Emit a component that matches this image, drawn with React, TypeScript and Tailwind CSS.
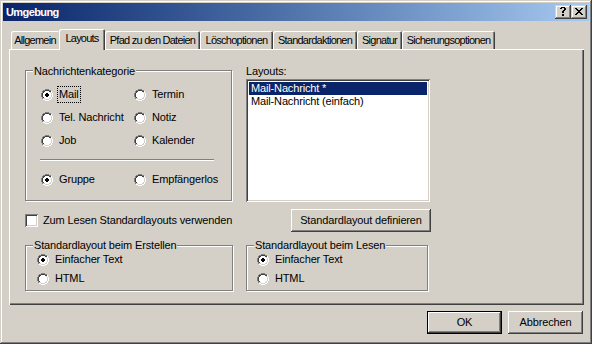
import React from "react";

const RING = [
  "....GGGG....",
  "..GGDDDDGG..",
  ".GDDWWWWDDH.",
  ".GDWWWWWWLH.",
  "GDWWWWWWWWLH",
  "GDWWWWWWWWLH",
  "GDWWWWWWWWLH",
  "GDWWWWWWWWLH",
  ".GDWWWWWWLH.",
  ".GLLWWWWLLH.",
  "..HHLLLLHH..",
  "....HHHH....",
];
const DOT = [".XX.", "XXXX", "XXXX", ".XX."];
const COLORS: Record<string, string> = {
  G: "#808080",
  D: "#404040",
  W: "#ffffff",
  L: "#d4d0c8",
  H: "#ffffff",
  X: "#000000",
};

function PixelMap({ map, ox = 0, oy = 0, prefix }: { map: string[]; ox?: number; oy?: number; prefix: string }) {
  const out: React.ReactNode[] = [];
  map.forEach((row, y) =>
    row.split("").forEach((c, x) => {
      if (c !== ".")
        out.push(<rect key={`${prefix}-${x}-${y}`} x={x + ox} y={y + oy} width={1} height={1} fill={COLORS[c]} />);
    })
  );
  return <>{out}</>;
}

function Radio({ checked }: { checked?: boolean }) {
  return (
    <svg width={12} height={12} viewBox="0 0 12 12" shapeRendering="crispEdges" className="shrink-0">
      <PixelMap map={RING} prefix="r" />
      {checked && <PixelMap map={DOT} ox={4} oy={4} prefix="d" />}
    </svg>
  );
}

function RadioItem({ label, checked, focus }: { label: string; checked?: boolean; focus?: boolean }) {
  return (
    <div className="flex items-center gap-[6px] h-[13px]">
      <Radio checked={checked} />
      {focus ? (
        <span className="-ml-[2px] -my-[2px] px-[1px] py-[1px] border border-dotted border-black whitespace-nowrap leading-[13px]">
          {label}
        </span>
      ) : (
        <span className="whitespace-nowrap leading-[13px]">{label}</span>
      )}
    </div>
  );
}

function GroupBox({
  label,
  className,
  labelTop,
  children,
}: {
  label: string;
  className: string;
  labelTop: string;
  children: React.ReactNode;
}) {
  return (
    <div className={`relative shrink-0 border border-[#808080] shadow-[1px_1px_0_#fff,inset_1px_1px_0_#fff] ${className}`}>
      <span className={`absolute left-[7px] ${labelTop} px-[1px] bg-[#d4d0c8] whitespace-nowrap leading-[13px]`}>{label}</span>
      {children}
    </div>
  );
}

function PushButton({ children, className, def }: { children: React.ReactNode; className: string; def?: boolean }) {
  if (def) {
    return (
      <div className={`border border-black ${className}`}>
        <div className="w-full h-full flex items-center justify-center shadow-[inset_-1px_-1px_#404040,inset_1px_1px_#fff,inset_-2px_-2px_#808080]">
          {children}
        </div>
      </div>
    );
  }
  return (
    <div
      className={`flex items-center justify-center shadow-[inset_-1px_-1px_#404040,inset_1px_1px_#fff,inset_-2px_-2px_#808080] ${className}`}
    >
      {children}
    </div>
  );
}

function Tab({ label, w, selected, noRight }: { label: string; w: string; selected?: boolean; noRight?: boolean }) {
  if (selected) {
    return (
      <div
        className={`relative z-10 -mb-[1px] h-[21px] ${w} shrink-0 flex justify-center pt-[3px] bg-[#d4d0c8] rounded-t-[2px] shadow-[inset_1px_1px_#fff,inset_-1px_0_#404040,inset_-2px_0_#808080]`}
      >
        <span className="whitespace-nowrap leading-[13px] tracking-[-0.8px]">{label}</span>
      </div>
    );
  }
  return (
    <div
      className={`h-[18px] ${w} shrink-0 flex justify-center pt-[3px] bg-[#d4d0c8] rounded-t-[2px] ${
        noRight
          ? "shadow-[inset_1px_1px_#fff]"
          : "shadow-[inset_1px_1px_#fff,inset_-1px_0_#404040,inset_-2px_0_#808080]"
      }`}
    >
      <span className="whitespace-nowrap leading-[13px] tracking-[-0.75px]">{label}</span>
    </div>
  );
}

const HELP = [
  ".XXXX.",
  "XX..XX",
  "....XX",
  "...XX.",
  "..XX..",
  "..XX..",
  "......",
  "..XX..",
  "..XX..",
];
const CLOSE = [
  "XX....XX",
  ".XX..XX.",
  "..XXXX..",
  "...XX...",
  "..XXXX..",
  ".XX..XX.",
  "XX....XX",
];

function CaptionButton({ map, w, h }: { map: string[]; w: number; h: number }) {
  return (
    <div className="w-[16px] h-[14px] bg-[#d4d0c8] flex items-center justify-center shadow-[inset_-1px_-1px_#404040,inset_1px_1px_#d4d0c8,inset_-2px_-2px_#808080,inset_2px_2px_#fff]">
      <svg width={w} height={h} viewBox={`0 0 ${w} ${h}`} shapeRendering="crispEdges" className="-mt-[1px]">
        <PixelMap map={map} prefix="c" />
      </svg>
    </div>
  );
}

export default function App() {
  return (
    <div
      className="w-[592px] h-[344px] bg-[#d4d0c8] p-[3px] flex flex-col text-[11px] leading-[13px] tracking-[-0.15px] text-black font-['Liberation_Sans',Arial,sans-serif] shadow-[inset_-1px_-1px_#404040,inset_1px_1px_#d4d0c8,inset_-2px_-2px_#808080,inset_2px_2px_#fff]"
    >
      {/* Title bar */}
      <div className="h-[18px] shrink-0 flex items-center justify-between pl-[3px] pr-[2px] bg-linear-to-r from-[#0a246a] to-[#a6caf0]">
        <span className="font-bold text-white whitespace-nowrap tracking-[-0.6px]">Umgebung</span>
        <div className="flex">
          <CaptionButton map={HELP} w={6} h={9} />
          <CaptionButton map={CLOSE} w={8} h={7} />
        </div>
      </div>

      {/* Tabs */}
      <div className="mt-[8px] ml-[6px] pl-[2px] h-[20px] flex items-end">
        <Tab label="Allgemein" w="w-[48px]" noRight />
        <Tab label="Layouts" w="w-[46px]" selected />
        <Tab label="Pfad zu den Dateien" w="w-[95px]" />
        <Tab label="Löschoptionen" w="w-[73px]" />
        <Tab label="Standardaktionen" w="w-[84px]" />
        <Tab label="Signatur" w="w-[45px]" />
        <Tab label="Sicherungsoptionen" w="w-[93px]" />
      </div>

      {/* Panel */}
      <div className="ml-[6px] w-[575px] h-[256px] shrink-0 flex flex-col pl-[16px] shadow-[inset_1px_1px_#fff,inset_-1px_-1px_#404040,inset_-2px_-2px_#808080]">
        <div className="flex items-start">
          <GroupBox label="Nachrichtenkategorie" className="mt-[21px] w-[207px] h-[131px]" labelTop="top-[-6px]">
            <div className="pt-[17px] pl-[15px] grid grid-cols-[93px_auto] gap-y-[10px]">
              <RadioItem label="Mail" checked focus />
              <RadioItem label="Termin" />
              <RadioItem label="Tel. Nachricht" />
              <RadioItem label="Notiz" />
              <RadioItem label="Job" />
              <RadioItem label="Kalender" />
            </div>
            <div className="ml-[14px] mt-[12px] w-[174px] h-[2px] border-t border-t-[#808080] border-b border-b-white" />
            <div className="mt-[12px] pl-[15px] grid grid-cols-[93px_auto]">
              <RadioItem label="Gruppe" checked />
              <RadioItem label="Empfängerlos" />
            </div>
          </GroupBox>
          <div className="ml-[14px] pt-[16px] w-[185px] flex flex-col">
            <span className="leading-[13px]">Layouts:</span>
            <div className="mt-[1px] w-[184px] h-[123px] bg-white p-[3px] shadow-[inset_1px_1px_#808080,inset_-1px_-1px_#fff,inset_2px_2px_#404040,inset_-2px_-2px_#d4d0c8]">
              <div className="h-[13px] bg-[#0a246a] text-white pl-[2px] leading-[13px] whitespace-nowrap">Mail-Nachricht *</div>
              <div className="h-[13px] pl-[2px] leading-[13px] whitespace-nowrap">Mail-Nachricht (einfach)</div>
            </div>
          </div>
        </div>

        <div className="mt-[7px] w-[406px] flex items-center justify-between">
          <div className="flex items-center gap-[5px]">
            <div className="w-[13px] h-[13px] bg-white shrink-0 shadow-[inset_1px_1px_#808080,inset_-1px_-1px_#fff,inset_2px_2px_#404040,inset_-2px_-2px_#d4d0c8]" />
            <span className="whitespace-nowrap">Zum Lesen Standardlayouts verwenden</span>
          </div>
          <PushButton className="w-[140px] h-[23px]">
            <span className="whitespace-nowrap">Standardlayout definieren</span>
          </PushButton>
        </div>

        <div className="mt-[13px] flex items-start">
          <GroupBox label="Standardlayout beim Erstellen" className="w-[208px] h-[46px]" labelTop="top-[-7px]">
            <div className="pt-[7px] pl-[11px] flex flex-col gap-[6px]">
              <RadioItem label="Einfacher Text" checked />
              <RadioItem label="HTML" />
            </div>
          </GroupBox>
          <GroupBox label="Standardlayout beim Lesen" className="ml-[13px] w-[182px] h-[46px]" labelTop="top-[-7px]">
            <div className="pt-[7px] pl-[10px] flex flex-col gap-[6px]">
              <RadioItem label="Einfacher Text" checked />
              <RadioItem label="HTML" />
            </div>
          </GroupBox>
        </div>
      </div>

      {/* Buttons */}
      <div className="mt-[6px] ml-[6px] w-[575px] pr-[1px] flex justify-end gap-[6px]">
        <PushButton className="w-[75px] h-[23px]" def>
          OK
        </PushButton>
        <PushButton className="w-[75px] h-[23px]">Abbrechen</PushButton>
      </div>
    </div>
  );
}
